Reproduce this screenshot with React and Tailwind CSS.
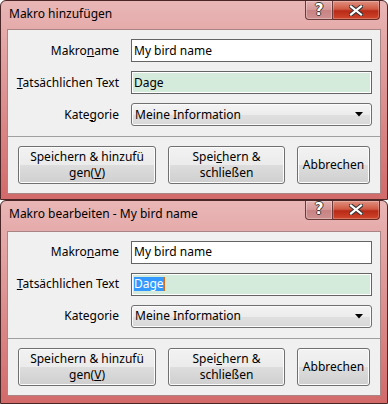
import React from "react";

const font = { fontFamily: '"Noto Sans", "Open Sans", Arial, sans-serif' };

// --- Title bar caption buttons ---
const CaptionButtons = () => (
    <div className="flex h-[19px] mr-[7px]">
        <div className="w-[28px] h-full flex items-center justify-center rounded-bl-[4px] border border-t-0 border-[#6b3a3a] bg-[linear-gradient(to_bottom,#e4b0b0_0%,#d49696_50%,#c88282_50%,#cf9090_100%)] shadow-[inset_0_0_0_1px_rgba(255,255,255,0.3)]">
            <span
                className="text-white font-bold text-[15px] leading-none [text-shadow:1px_0_0_#3c3c3c,-1px_0_0_#3c3c3c,0_1px_0_#3c3c3c,0_-1px_0_#3c3c3c]"
                style={{ fontFamily: '"DejaVu Sans", sans-serif' }}
            >
                ?
            </span>
        </div>
        <div className="w-[47px] h-full flex items-center justify-center rounded-br-[4px] border border-l-0 border-t-0 border-[#6b2a20] bg-[linear-gradient(to_bottom,#e09080_0%,#cf5a44_45%,#b82a16_55%,#d0462c_100%)] shadow-[inset_0_0_0_1px_rgba(255,255,255,0.25)]">
            <svg width="14" height="11" viewBox="0 0 14 11">
                <path d="M2 1.5 L12 9.5 M12 1.5 L2 9.5" stroke="#333333" strokeWidth="4.2" strokeLinecap="square" />
                <path d="M2 1.5 L12 9.5 M12 1.5 L2 9.5" stroke="#ffffff" strokeWidth="2.2" strokeLinecap="square" />
            </svg>
        </div>
    </div>
);

const Label = ({ children }) => (
    <div className="w-[111px] text-right text-[12px] text-black leading-none" style={font}>{children}</div>
);

const Button = ({ width, children }) => (
    <div
        className="h-[38px] rounded-[3px] border border-[#707070] flex flex-col items-center justify-center text-[12px] leading-[16px] text-black text-center bg-[linear-gradient(to_bottom,#f2f2f2_0%,#ebebeb_50%,#dddddd_50%,#cfcfcf_100%)] shadow-[inset_0_0_0_1px_#fcfcfc]"
        style={{ ...font, width }}
    >
        {children}
    </div>
);

// --- One dialog window ---
const MacroDialog = ({ title, titleHeight, selected, height }) => (
    <div
        className="w-[388px] flex flex-col border border-[#4a2626] rounded-t-[6px] bg-gradient-to-b from-[#e9b6b6] via-[#dc9090] to-[#d26a6a]"
        style={{ height }}
    >
        <div className="flex items-start justify-between" style={{ height: titleHeight - 1 }}>
            <div className="pl-[8px] pt-[7px] text-[12px] text-black leading-none" style={font}>{title}</div>
            <CaptionButtons />
        </div>
        <div className="mx-[6px] bg-[#f0f0f0] border border-[#a98585] flex flex-col h-[165px]">
            <div className="flex flex-col gap-[9px] pt-[9px]">
                <div className="flex items-center gap-[12px]">
                    <Label>Makro<u>n</u>ame</Label>
                    <div className="w-[241px] h-[23px] bg-white border border-[#646464] flex items-center pl-[2px] text-[12px] text-black" style={font}>My bird name</div>
                </div>
                <div className="flex items-center gap-[12px]">
                    <Label><u>T</u>atsächlichen Text</Label>
                    <div className="w-[241px] h-[23px] bg-white border border-[#646464] p-[1px]">
                        <div className="w-full h-full bg-[#d4eadb] flex items-center pl-[1px] text-[12px] text-black" style={font}>
                            {selected ? (
                                <span className="bg-[#3399ff] text-white leading-[14px] border-r border-[#d07020]">Dage</span>
                            ) : (
                                <span>Dage</span>
                            )}
                        </div>
                    </div>
                </div>
                <div className="flex items-center gap-[12px]">
                    <Label>Kate<u>g</u>orie</Label>
                    <div className="w-[241px] h-[23px] rounded-[3px] border border-[#707070] flex items-center justify-between pl-[3px] pr-[8px] text-[12px] text-black bg-[linear-gradient(to_bottom,#f4f4f4_0%,#ececec_50%,#e0e0e0_50%,#d8d8d8_100%)] shadow-[inset_0_0_0_1px_#fbfbfb]" style={font}>
                        <span>Meine Information</span>
                        <svg width="8" height="5" viewBox="0 0 8 5"><path d="M0 0 H8 L4 4.5 Z" fill="#000" /></svg>
                    </div>
                </div>
            </div>
            <div className="mt-[10px] border-t border-[#a0a0a0]" />
            <div className="flex gap-[12px] pl-[10px] pt-[9px]">
                <Button width={138}>
                    <span>Speichern &amp; hinzufü</span>
                    <span>gen(<u>V</u>)</span>
                </Button>
                <Button width={117}>
                    <span>Spei<u>c</u>hern &amp;</span>
                    <span>schließen</span>
                </Button>
                <Button width={73}>
                    <span>Abbrechen</span>
                </Button>
            </div>
        </div>
    </div>
);

export default function App() {
    return (
        <div className="w-[388px] h-[404px] overflow-hidden bg-white flex flex-col">
            <MacroDialog title="Makro hinzufügen" titleHeight={29} height={201} />
            <MacroDialog title="Makro bearbeiten - My bird name" titleHeight={31} selected height={206} />
        </div>
    );
}
